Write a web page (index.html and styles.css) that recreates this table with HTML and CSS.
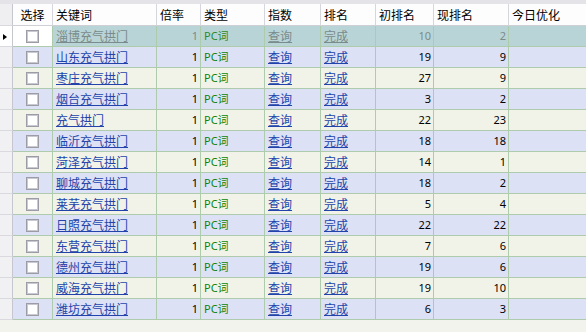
FILE: index.html
```html
<!DOCTYPE html>
<html>
<head>
<meta charset="utf-8">
<link rel="stylesheet" href="styles.css">
</head>
<body>
<div class="view">
<table class="grid">
<colgroup>
<col class="c-rh"><col class="c-chk"><col class="c-kw"><col class="c-rate"><col class="c-type"><col class="c-idx"><col class="c-rank"><col class="c-first"><col class="c-now"><col class="c-today">
</colgroup>
<thead>
<tr>
<th class="rh"></th><th class="center">选择</th><th>关键词</th><th>倍率</th><th>类型</th><th>指数</th><th>排名</th><th>初排名</th><th>现排名</th><th class="last">今日优化</th>
</tr>
</thead>
<tbody>
<tr class="sel"><td class="rh"><span class="arrow"></span></td><td class="chk"><span class="box"></span></td><td><a>淄博充气拱门</a></td><td class="num">1</td><td class="type">PC词</td><td><a>查询</a></td><td><a>完成</a></td><td class="num">10</td><td class="num">2</td><td class="last"></td></tr>
<tr class="even"><td class="rh"></td><td class="chk"><span class="box"></span></td><td><a>山东充气拱门</a></td><td class="num">1</td><td class="type">PC词</td><td><a>查询</a></td><td><a>完成</a></td><td class="num">19</td><td class="num">9</td><td class="last"></td></tr>
<tr class="odd"><td class="rh"></td><td class="chk"><span class="box"></span></td><td><a>枣庄充气拱门</a></td><td class="num">1</td><td class="type">PC词</td><td><a>查询</a></td><td><a>完成</a></td><td class="num">27</td><td class="num">9</td><td class="last"></td></tr>
<tr class="even"><td class="rh"></td><td class="chk"><span class="box"></span></td><td><a>烟台充气拱门</a></td><td class="num">1</td><td class="type">PC词</td><td><a>查询</a></td><td><a>完成</a></td><td class="num">3</td><td class="num">2</td><td class="last"></td></tr>
<tr class="odd"><td class="rh"></td><td class="chk"><span class="box"></span></td><td><a>充气拱门</a></td><td class="num">1</td><td class="type">PC词</td><td><a>查询</a></td><td><a>完成</a></td><td class="num">22</td><td class="num">23</td><td class="last"></td></tr>
<tr class="even"><td class="rh"></td><td class="chk"><span class="box"></span></td><td><a>临沂充气拱门</a></td><td class="num">1</td><td class="type">PC词</td><td><a>查询</a></td><td><a>完成</a></td><td class="num">18</td><td class="num">18</td><td class="last"></td></tr>
<tr class="odd"><td class="rh"></td><td class="chk"><span class="box"></span></td><td><a>菏泽充气拱门</a></td><td class="num">1</td><td class="type">PC词</td><td><a>查询</a></td><td><a>完成</a></td><td class="num">14</td><td class="num">1</td><td class="last"></td></tr>
<tr class="even"><td class="rh"></td><td class="chk"><span class="box"></span></td><td><a>聊城充气拱门</a></td><td class="num">1</td><td class="type">PC词</td><td><a>查询</a></td><td><a>完成</a></td><td class="num">18</td><td class="num">2</td><td class="last"></td></tr>
<tr class="odd"><td class="rh"></td><td class="chk"><span class="box"></span></td><td><a>莱芜充气拱门</a></td><td class="num">1</td><td class="type">PC词</td><td><a>查询</a></td><td><a>完成</a></td><td class="num">5</td><td class="num">4</td><td class="last"></td></tr>
<tr class="even"><td class="rh"></td><td class="chk"><span class="box"></span></td><td><a>日照充气拱门</a></td><td class="num">1</td><td class="type">PC词</td><td><a>查询</a></td><td><a>完成</a></td><td class="num">22</td><td class="num">22</td><td class="last"></td></tr>
<tr class="odd"><td class="rh"></td><td class="chk"><span class="box"></span></td><td><a>东营充气拱门</a></td><td class="num">1</td><td class="type">PC词</td><td><a>查询</a></td><td><a>完成</a></td><td class="num">7</td><td class="num">6</td><td class="last"></td></tr>
<tr class="even"><td class="rh"></td><td class="chk"><span class="box"></span></td><td><a>德州充气拱门</a></td><td class="num">1</td><td class="type">PC词</td><td><a>查询</a></td><td><a>完成</a></td><td class="num">19</td><td class="num">6</td><td class="last"></td></tr>
<tr class="odd"><td class="rh"></td><td class="chk"><span class="box"></span></td><td><a>威海充气拱门</a></td><td class="num">1</td><td class="type">PC词</td><td><a>查询</a></td><td><a>完成</a></td><td class="num">19</td><td class="num">10</td><td class="last"></td></tr>
<tr class="even"><td class="rh"></td><td class="chk"><span class="box"></span></td><td><a>潍坊充气拱门</a></td><td class="num">1</td><td class="type">PC词</td><td><a>查询</a></td><td><a>完成</a></td><td class="num">6</td><td class="num">3</td><td class="last"></td></tr>
</tbody>
</table>
</div>
</body>
</html>
```
FILE: styles.css
```css
html, body {
  margin: 0;
  padding: 0;
}
body {
  background: #f3f3ee;
  font-family: "Noto Sans CJK SC", "Noto Sans", sans-serif;
  font-size: 12px;
  color: #000;
}
.view {
  border-top: 4px solid #e4e4e8;
  width: 586px;
}
.grid {
  border-collapse: separate;
  border-spacing: 0;
  table-layout: fixed;
  width: 586px;
}
.c-rh { width: 13px; }
.c-chk { width: 40px; }
.c-kw { width: 104px; }
.c-rate { width: 44px; }
.c-type { width: 64px; }
.c-idx { width: 56px; }
.c-rank { width: 55px; }
.c-first { width: 58px; }
.c-now { width: 75px; }
.c-today { width: 77px; }

.grid th,
.grid td {
  padding: 0 3px;
  height: 20px;
  line-height: 20px;
  border-right: 1px solid #aecbae;
  border-bottom: 1px solid #aecbae;
  white-space: nowrap;
  overflow: hidden;
  text-align: left;
  vertical-align: middle;
}
.grid th {
  height: 21px;
  line-height: 21px;
  font-weight: normal;
  background: #fdfdfd;
  border-right-color: #d6d6de;
  border-bottom-color: #cfcfd6;
}
.grid th.center { text-align: center; }
.grid .last { border-right: none; }

.grid .rh {
  padding: 0 0 0 3px;
  background: #f1f1f4;
  border-right-color: #c6c6ce;
  border-bottom-color: #d9d9df;
}
.grid th.rh { background: #efeff1; }

.even td { background: #dde1f5; }
.odd td { background: #f1f3e9; }
.sel td { background: #b9d4d6; color: #7a8b8b; }
.sel td.rh, .sel td.chk { background: #fff; }

.grid .chk { text-align: center; padding: 0; }
.box {
  display: inline-block;
  width: 13px;
  height: 13px;
  box-sizing: border-box;
  border: 1px solid #9c9ca6;
  box-shadow: inset 0 0 0 1px #c9c9d1;
  background: #fff;
  vertical-align: middle;
  margin-top: -2px;
}

.arrow {
  display: inline-block;
  width: 0;
  height: 0;
  border-left: 4px solid #000;
  border-top: 3px solid transparent;
  border-bottom: 3px solid transparent;
  vertical-align: middle;
  margin-top: -2px;
}

.grid a {
  color: #2244aa;
  text-decoration: underline;
}
.sel a { color: #7a8b8b; }

.grid .num {
  text-align: right;
  padding-right: 2px;
  font-family: "Noto Sans", sans-serif;
  font-size: 11px;
}
.grid .type {
  color: #0a850a;
  font-family: "Noto Sans", "Noto Sans CJK SC", sans-serif;
  font-size: 11px;
}
.sel .type { color: #2a8a2a; }
```
